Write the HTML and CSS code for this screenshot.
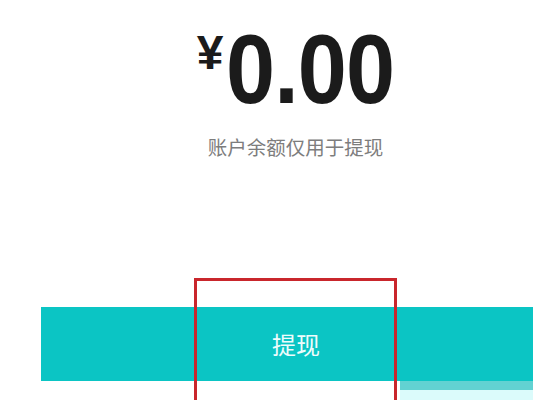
FILE: index.html
```html
<!DOCTYPE html>
<html lang="zh-CN">
<head>
<meta charset="utf-8">
<title>提现</title>
<link rel="stylesheet" href="styles.css">
</head>
<body>
<div class="page">
  <div class="balance">
    <div class="amount">
      <span class="yen">¥</span><span class="digits">0.00</span>
    </div>
    <p class="note">账户余额仅用于提现</p>
  </div>
  <div class="action">
    <button class="withdraw" type="button">提现</button>
  </div>
  <div class="strip strip-mid"></div>
  <div class="strip strip-light"></div>
  <div class="highlight"></div>
</div>
</body>
</html>
```

FILE: styles.css
```css
html, body {
  margin: 0;
  padding: 0;
  background: #ffffff;
  overflow: hidden;
}

.page {
  position: relative;
  width: 533px;
  height: 400px;
  overflow: hidden;
  font-family: "Noto Sans CJK SC", "Liberation Sans", sans-serif;
}

.balance {
  display: flex;
  flex-direction: column;
  align-items: center;
  padding-top: 20px;
  padding-left: 58px;
}

.amount {
  display: flex;
  align-items: flex-start;
  color: #1b1b1b;
  font-family: "Liberation Sans", Arial, sans-serif;
  font-weight: bold;
}

.yen {
  font-size: 48px;
  line-height: 1;
  margin-top: 9px;
  margin-right: 3px;
}

.digits {
  display: inline-block;
  font-size: 98px;
  line-height: 1;
  letter-spacing: -1px;
  transform: scaleX(0.9);
  transform-origin: left top;
  margin-right: -19px;
}

.note {
  margin: 19px 0 0;
  font-size: 19.5px;
  line-height: 1;
  color: #7d7d7d;
  font-family: "Noto Sans CJK SC", sans-serif;
  font-weight: 400;
}

.action {
  margin-top: 150px;
  padding-left: 41px;
}

.withdraw {
  display: block;
  width: 510px;
  height: 74px;
  border: 0;
  padding: 0;
  background: #0bc5c4;
  color: #effcfc;
  font-family: "Noto Sans CJK SC", sans-serif;
  font-size: 24px;
  line-height: 74px;
  text-align: center;
}

.strip {
  position: absolute;
  left: 400px;
  right: 0;
}

.strip-mid {
  top: 381px;
  height: 9px;
  background: #62d2d2;
}

.strip-light {
  top: 390px;
  height: 10px;
  background: #dbfbfb;
}

.highlight {
  position: absolute;
  left: 194px;
  top: 278px;
  width: 197px;
  height: 140px;
  border: 3px solid #c9262c;
}
```
